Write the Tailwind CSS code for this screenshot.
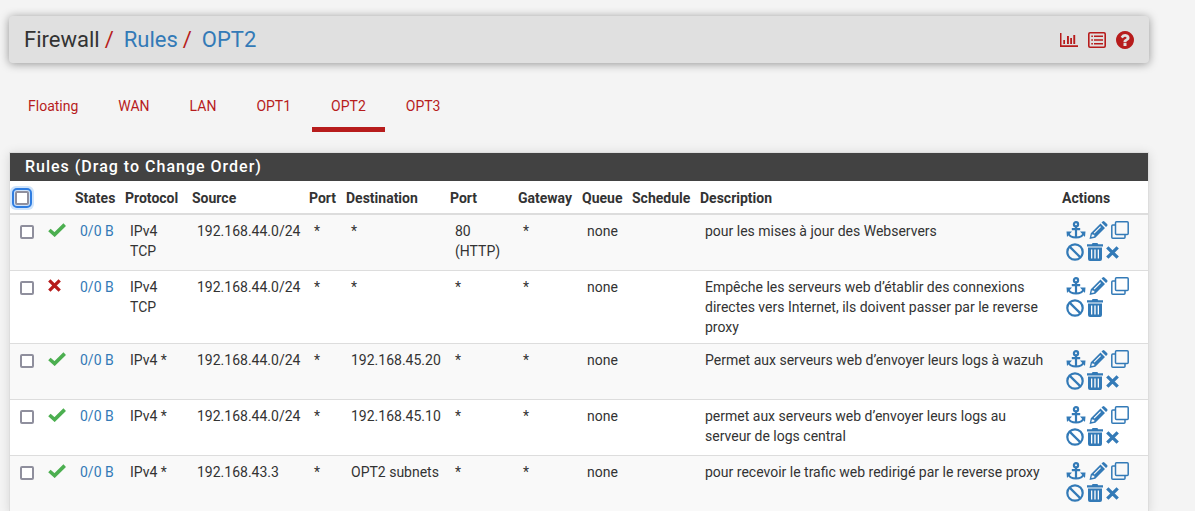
<!DOCTYPE html>
<html lang="en">
<head>
<meta charset="utf-8">
<title>Firewall: Rules: OPT2</title>
<script src="https://cdn.jsdelivr.net/npm/@tailwindcss/browser@4"></script>
</head>
<body class="bg-[#f4f4f4] font-[Roboto,sans-serif] text-sm leading-5 text-[#333]">
<svg class="hidden" aria-hidden="true">
  <symbol id="check" viewBox="0 0 18 14"><path d="M1.400 7 6.600 11.600 16.700 1.600" fill="none" stroke="currentColor" stroke-width="3.600"/></symbol>
  <symbol id="times" viewBox="0 0 13 13"><path d="M1.300 1.300l10.400 10.400M11.700 1.300L1.300 11.700" fill="none" stroke="currentColor" stroke-width="3.300"/></symbol>
  <symbol id="anchor" viewBox="0 0 20 18"><g fill="none" stroke="currentColor" stroke-width="2.200"><circle cx="10" cy="3.200" r="2.100"/><path d="M10 5v11M5.800 8.200h8.400M2.500 12.500c1 2.800 4 4 7.500 4s6.500-1.200 7.500-4"/></g><path d="M.5 10.500h5.500l-5 5.500zM19.500 10.500H14l5 5.500z" fill="currentColor"/></symbol>
  <symbol id="pencil" viewBox="0 0 18 18"><path fill="currentColor" fill-rule="evenodd" d="M0 18l1.300-5.800L11 2.500 15.500 7 5.800 16.700zM1.900 16.100l2.900-.7v-1.700H3.100l-.6-.8zM5 12.600l6.500-6.500-.8-.8-6.500 6.500zM12 1.500L13.100.4q.9-.8 1.800 0L17.600 3.100q.8.900 0 1.800L16.500 6z"/></symbol>
  <symbol id="clone" viewBox="0 0 18 18"><g fill="none" stroke="currentColor" stroke-width="1.500"><rect x="4.500" y=".8" width="12.700" height="12.700" rx="1"/><path d="M4.500 4H1.800a1 1 0 0 0-1 1v11.200a1 1 0 0 0 1 1H13a1 1 0 0 0 1-1v-2.700"/></g></symbol>
  <symbol id="ban" viewBox="0 0 18 18"><g fill="none" stroke="currentColor" stroke-width="2.200"><circle cx="9" cy="9" r="7.700"/><path d="M3.600 3.600l10.800 10.800"/></g></symbol>
  <symbol id="trash" viewBox="0 0 16 18"><path fill="currentColor" fill-rule="evenodd" d="M0 1.300h4.800L5.600 0h4.800l.8 1.300H16v2.200H0zM1 4.500h14V16a2 2 0 0 1-2 2H3a2 2 0 0 1-2-2zM4 6.500v9h1.300v-9zM7.300 6.500v9h1.400v-9zM10.700 6.500v9H12v-9z"/></symbol>
  <symbol id="chart" viewBox="0 0 18 14"><path fill="currentColor" d="M0 0h1.500v12.300H18V14H0zM3.300 7h1.700v4H3.300zM7 3h1.900v8H7zM10.200 5h1.800v6h-1.800zM13.300 2h1.900v9h-1.900z"/></symbol>
  <symbol id="list" viewBox="0 0 18 16"><rect x=".8" y=".8" width="16.400" height="14.400" rx="1.200" fill="none" stroke="currentColor" stroke-width="1.600"/><path fill="currentColor" d="M3.300 3.400h1.600V5H3.300zM6 3.500h9V5H6zM3.300 7.200h1.600v1.600H3.300zM6 7.300h9v1.500H6zM3.300 11h1.600v1.600H3.300zM6 11h9v1.500H6z"/></symbol>
  <symbol id="help" viewBox="128 128 1536 1536"><path fill="currentColor" d="M1024 1376v-192q0-14-9-23t-23-9h-192q-14 0-23 9t-9 23v192q0 14 9 23t23 9h192q14 0 23-9t9-23zm256-672q0-88-55.500-163t-138.500-116-170-41q-243 0-371 213-15 24 8 42l132 100q7 6 19 6 16 0 25-12 53-68 86-92 34-24 86-24 48 0 85.500 26t37.500 59q0 38-20 61t-68 45q-63 28-115.500 86.500t-52.500 125.500v36q0 14 9 23t23 9h192q14 0 23-9t9-23q0-19 21.500-49.500t54.500-49.500q32-18 49-28.500t46-35 44.500-48 28-60.500 12.500-81zm384 192q0 209-103 385.500t-279.500 279.500-385.500 103-385.500-103-279.500-279.500-103-385.500 103-385.500 279.500-279.500 385.500-103 385.500 103 279.500 279.500 103 385.500z"/></symbol>
</svg>
<div class="h-screen overflow-hidden pl-[9px] pr-[46px] pt-4">
  <header class="flex items-center justify-between rounded-sm bg-[#e0e0e0] px-[15px] py-[9px] shadow-[0_1px_10px_rgba(0,0,0,0.4)]">
    <nav class="flex text-[22px] leading-[29px]">
      <span>Firewall</span><span class="pl-[5px] pr-[10px] text-[#b71c1c]">/</span>
      <a href="#" class="text-[#337ab7]">Rules</a><span class="pl-[5px] pr-[10px] text-[#b71c1c]">/</span>
      <a href="#" class="text-[#337ab7]">OPT2</a>
    </nav>
    <div class="flex items-center gap-[10px] text-[#b71c1c]">
      <a href="#" aria-label="Status"><svg class="h-[14px] w-[18px]"><use href="#chart"/></svg></a>
      <a href="#" aria-label="Log"><svg class="h-4 w-[18px]"><use href="#list"/></svg></a>
      <a href="#" aria-label="Help"><svg class="h-[18px] w-[18px]"><use href="#help"/></svg></a>
    </div>
  </header>
  <nav class="mt-[23px] flex gap-[2px] text-[#b71c1c]">
    <a href="#" class="border-b-5 border-transparent px-[19px] pt-[10px] pb-[11px]">Floating</a>
    <a href="#" class="border-b-5 border-transparent px-[19px] pt-[10px] pb-[11px]">WAN</a>
    <a href="#" class="border-b-5 border-transparent px-[19px] pt-[10px] pb-[11px]">LAN</a>
    <a href="#" class="border-b-5 border-transparent px-[19px] pt-[10px] pb-[11px]">OPT1</a>
    <a href="#" class="border-b-5 border-[#b71c1c] px-[19px] pt-[10px] pb-[11px]">OPT2</a>
    <a href="#" class="border-b-5 border-transparent px-[19px] pt-[10px] pb-[11px]">OPT3</a>
  </nav>
  <main class="mt-5 border border-[#ddd] bg-white shadow-[0_1px_10px_rgba(0,0,0,0.12)]">
    <h2 class="bg-[#424242] px-[15px] py-1 text-base leading-5 font-medium tracking-[1px] text-white">Rules (Drag to Change Order)</h2>
    <table class="w-full table-fixed border-separate border-spacing-0">
      <colgroup><col class="w-8"><col class="w-7"><col class="w-[50px]"><col class="w-[67px]"><col class="w-[117px]"><col class="w-[37px]"><col class="w-[104px]"><col class="w-[68px]"><col class="w-16"><col class="w-[50px]"><col class="w-[68px]"><col><col class="w-[91px]"></colgroup>
      <thead>
        <tr class="text-left [&>th]:border-b-2 [&>th]:border-[#ddd] [&>th]:px-[5px] [&>th]:pt-[7px] [&>th]:pb-[5px] [&>th]:font-bold">
          <th><input type="checkbox" aria-label="Select all rules" class="block h-[14px] w-[14px] appearance-none rounded-[2px] border-2 border-[#8f8f9d] bg-white outline-2 outline-offset-1 outline-[#2f7de1] shadow-[0_0_0_5px_#cfe4fb]"></th>
          <th></th><th>States</th><th>Protocol</th><th>Source</th><th>Port</th><th>Destination</th><th>Port</th><th>Gateway</th><th>Queue</th><th>Schedule</th><th>Description</th><th>Actions</th>
        </tr>
      </thead>
      <tbody id="rules"></tbody>
    </table>
  </main>
</div>
<script>
const rules = [
  [1, 'IPv4 TCP', '192.168.44.0/24', '*', '80 (HTTP)', 'pour les mises à jour des Webservers'],
  [0, 'IPv4 TCP', '192.168.44.0/24', '*', '*', 'Empêche les serveurs web d’établir des connexions directes vers Internet, ils doivent passer par le reverse proxy'],
  [1, 'IPv4 *', '192.168.44.0/24', '192.168.45.20', '*', 'Permet aux serveurs web d’envoyer leurs logs à wazuh'],
  [1, 'IPv4 *', '192.168.44.0/24', '192.168.45.10', '*', 'permet aux serveurs web d’envoyer leurs logs au serveur de logs central'],
  [1, 'IPv4 *', '192.168.43.3', 'OPT2 subnets', '*', 'pour recevoir le trafic web redirigé par le reverse proxy'],
];
const action = (id, label, size) => `<a href="#" aria-label="${label}"><svg class="${size}"><use href="#${id}"/></svg></a>`;
document.getElementById('rules').innerHTML = rules.map(([pass, proto, src, dst, port, desc], i) => `
  <tr class="align-top odd:bg-[#f9f9f9] [&>td]:border-b [&>td]:border-[#ddd] [&>td]:py-[6px] [&>td]:pl-[10px]">
    <td><input type="checkbox" aria-label="Select rule ${i + 1}" class="mt-1 block h-[14px] w-[14px] appearance-none rounded-[2px] border-2 border-[#8f8f9d] bg-white"></td>
    <td><div class="-ml-1 pt-[2px]">${pass
      ? '<svg class="h-[14px] w-[18px] text-[#4caf50]" aria-label="pass"><use href="#check"/></svg>'
      : '<svg class="h-[13px] w-[13px] text-[#b71c1c]" aria-label="block"><use href="#times"/></svg>'}</div></td>
    <td class="whitespace-nowrap"><a href="#" class="text-[#337ab7]">0/0 B</a></td>
    <td>${proto.replace(' TCP', '<br>TCP')}</td><td>${src}</td><td>*</td><td>${dst}</td><td>${port}</td><td>*</td><td>none</td><td></td>
    <td class="pr-2">${desc}</td>
    <td><div class="-ml-px flex h-[43px] flex-col gap-1 text-[#337ab7]">
      <div class="flex h-[18px] gap-[3px]">${action('anchor', 'Add anchor', 'h-[18px] w-[20px]')}${action('pencil', 'Edit', 'h-[18px] w-[19px]')}${action('clone', 'Copy', 'h-[18px] w-[18px]')}</div>
      <div class="flex h-[18px] gap-[3px]">${action('ban', 'Disable', 'h-[18px] w-[18px]')}${action('trash', 'Delete', 'h-[18px] w-4')}${i === 1 ? '' : action('times', 'Kill states', 'mt-[3px] h-[13px] w-[13px]')}</div>
    </div></td>
  </tr>`).join('');
</script>
</body>
</html>
